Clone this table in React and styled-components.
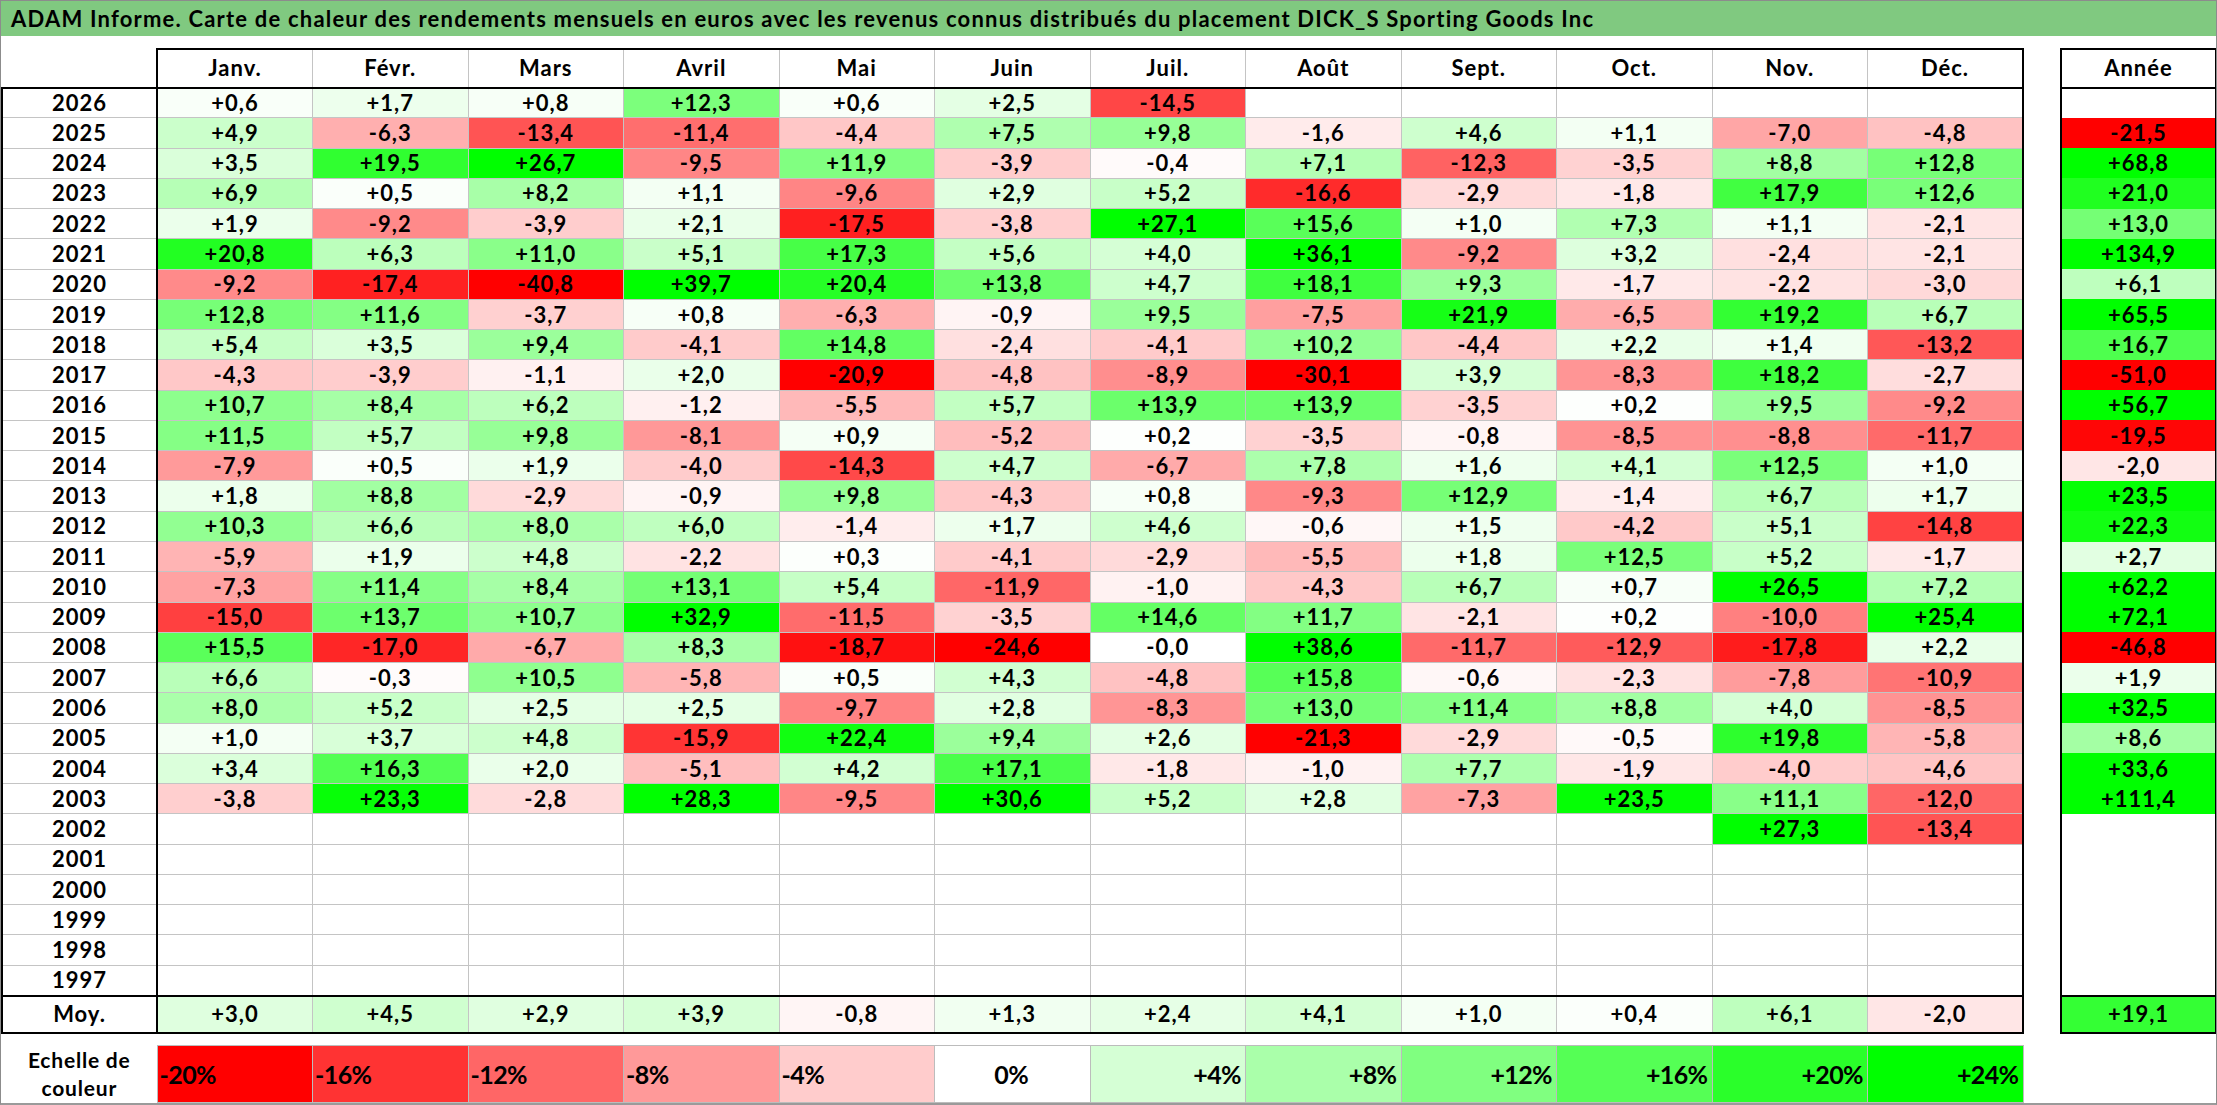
import React from 'react'
import styled, { createGlobalStyle } from 'styled-components'

const GlobalStyle = createGlobalStyle`
  html, body {
    margin: 0;
    padding: 0;
    background: #ffffff;
  }
  body {
    font-family: Lato, "Open Sans", "Liberation Sans", sans-serif;
    color: #000;
  }
`

const MONTHS = ['Janv.', 'Févr.', 'Mars', 'Avril', 'Mai', 'Juin', 'Juil.', 'Août', 'Sept.', 'Oct.', 'Nov.', 'Déc.']

// year, 12 months, year total ('' = no data)
const ROWS = [
  ['2026', '+0,6', '+1,7', '+0,8', '+12,3', '+0,6', '+2,5', '-14,5', '', '', '', '', '', ''],
  ['2025', '+4,9', '-6,3', '-13,4', '-11,4', '-4,4', '+7,5', '+9,8', '-1,6', '+4,6', '+1,1', '-7,0', '-4,8', '-21,5'],
  ['2024', '+3,5', '+19,5', '+26,7', '-9,5', '+11,9', '-3,9', '-0,4', '+7,1', '-12,3', '-3,5', '+8,8', '+12,8', '+68,8'],
  ['2023', '+6,9', '+0,5', '+8,2', '+1,1', '-9,6', '+2,9', '+5,2', '-16,6', '-2,9', '-1,8', '+17,9', '+12,6', '+21,0'],
  ['2022', '+1,9', '-9,2', '-3,9', '+2,1', '-17,5', '-3,8', '+27,1', '+15,6', '+1,0', '+7,3', '+1,1', '-2,1', '+13,0'],
  ['2021', '+20,8', '+6,3', '+11,0', '+5,1', '+17,3', '+5,6', '+4,0', '+36,1', '-9,2', '+3,2', '-2,4', '-2,1', '+134,9'],
  ['2020', '-9,2', '-17,4', '-40,8', '+39,7', '+20,4', '+13,8', '+4,7', '+18,1', '+9,3', '-1,7', '-2,2', '-3,0', '+6,1'],
  ['2019', '+12,8', '+11,6', '-3,7', '+0,8', '-6,3', '-0,9', '+9,5', '-7,5', '+21,9', '-6,5', '+19,2', '+6,7', '+65,5'],
  ['2018', '+5,4', '+3,5', '+9,4', '-4,1', '+14,8', '-2,4', '-4,1', '+10,2', '-4,4', '+2,2', '+1,4', '-13,2', '+16,7'],
  ['2017', '-4,3', '-3,9', '-1,1', '+2,0', '-20,9', '-4,8', '-8,9', '-30,1', '+3,9', '-8,3', '+18,2', '-2,7', '-51,0'],
  ['2016', '+10,7', '+8,4', '+6,2', '-1,2', '-5,5', '+5,7', '+13,9', '+13,9', '-3,5', '+0,2', '+9,5', '-9,2', '+56,7'],
  ['2015', '+11,5', '+5,7', '+9,8', '-8,1', '+0,9', '-5,2', '+0,2', '-3,5', '-0,8', '-8,5', '-8,8', '-11,7', '-19,5'],
  ['2014', '-7,9', '+0,5', '+1,9', '-4,0', '-14,3', '+4,7', '-6,7', '+7,8', '+1,6', '+4,1', '+12,5', '+1,0', '-2,0'],
  ['2013', '+1,8', '+8,8', '-2,9', '-0,9', '+9,8', '-4,3', '+0,8', '-9,3', '+12,9', '-1,4', '+6,7', '+1,7', '+23,5'],
  ['2012', '+10,3', '+6,6', '+8,0', '+6,0', '-1,4', '+1,7', '+4,6', '-0,6', '+1,5', '-4,2', '+5,1', '-14,8', '+22,3'],
  ['2011', '-5,9', '+1,9', '+4,8', '-2,2', '+0,3', '-4,1', '-2,9', '-5,5', '+1,8', '+12,5', '+5,2', '-1,7', '+2,7'],
  ['2010', '-7,3', '+11,4', '+8,4', '+13,1', '+5,4', '-11,9', '-1,0', '-4,3', '+6,7', '+0,7', '+26,5', '+7,2', '+62,2'],
  ['2009', '-15,0', '+13,7', '+10,7', '+32,9', '-11,5', '-3,5', '+14,6', '+11,7', '-2,1', '+0,2', '-10,0', '+25,4', '+72,1'],
  ['2008', '+15,5', '-17,0', '-6,7', '+8,3', '-18,7', '-24,6', '-0,0', '+38,6', '-11,7', '-12,9', '-17,8', '+2,2', '-46,8'],
  ['2007', '+6,6', '-0,3', '+10,5', '-5,8', '+0,5', '+4,3', '-4,8', '+15,8', '-0,6', '-2,3', '-7,8', '-10,9', '+1,9'],
  ['2006', '+8,0', '+5,2', '+2,5', '+2,5', '-9,7', '+2,8', '-8,3', '+13,0', '+11,4', '+8,8', '+4,0', '-8,5', '+32,5'],
  ['2005', '+1,0', '+3,7', '+4,8', '-15,9', '+22,4', '+9,4', '+2,6', '-21,3', '-2,9', '-0,5', '+19,8', '-5,8', '+8,6'],
  ['2004', '+3,4', '+16,3', '+2,0', '-5,1', '+4,2', '+17,1', '-1,8', '-1,0', '+7,7', '-1,9', '-4,0', '-4,6', '+33,6'],
  ['2003', '-3,8', '+23,3', '-2,8', '+28,3', '-9,5', '+30,6', '+5,2', '+2,8', '-7,3', '+23,5', '+11,1', '-12,0', '+111,4'],
  ['2002', '', '', '', '', '', '', '', '', '', '', '+27,3', '-13,4', ''],
  ['2001', '', '', '', '', '', '', '', '', '', '', '', '', ''],
  ['2000', '', '', '', '', '', '', '', '', '', '', '', '', ''],
  ['1999', '', '', '', '', '', '', '', '', '', '', '', '', ''],
  ['1998', '', '', '', '', '', '', '', '', '', '', '', '', ''],
  ['1997', '', '', '', '', '', '', '', '', '', '', '', '', ''],
]

const AVERAGE = ['+3,0', '+4,5', '+2,9', '+3,9', '-0,8', '+1,3', '+2,4', '+4,1', '+1,0', '+0,4', '+6,1', '-2,0', '+19,1']

const SCALE = [-20, -16, -12, -8, -4, 0, 4, 8, 12, 16, 20, 24]

// excel-like two colour scale: red at -20, white at 0, green at +24
const heat = (text) => {
  if (text === '' || text === undefined) return '#ffffff'
  const v = parseFloat(String(text).replace(',', '.'))
  if (v >= 0) {
    const c = Math.round(255 * (1 - Math.min(v / 24, 1)))
    return `rgb(${c},255,${c})`
  }
  const c = Math.round(255 * (1 - Math.min(-v / 20, 1)))
  return `rgb(255,${c},${c})`
}

const GRID = '#c4c4c4'
const BLACK = '2px solid #000'

const App = () => {
  return (
    <>
      <GlobalStyle />
      <Sheet>
        <TitleBar>
          ADAM Informe. Carte de chaleur des rendements mensuels en euros avec les revenus connus distribués du placement DICK_S Sporting Goods Inc
        </TitleBar>
        <HeatTable>
          <colgroup>
            <Col $w={155} />
            {MONTHS.map((m) => (
              <Col key={m} $w={155.5} />
            ))}
            <Col $w={38} />
            <Col $w={155} />
          </colgroup>
          <tbody>
            <HeadRow>
              <Corner />
              {MONTHS.map((m, i) => (
                <MonthHead key={m} $first={i === 0} $last={i === 11}>
                  {m}
                </MonthHead>
              ))}
              <Gap />
              <TotalHead>Année</TotalHead>
            </HeadRow>

            {ROWS.map((row) => (
              <YearRow key={row[0]}>
                <YearCell>{row[0]}</YearCell>
                {row.slice(1, 13).map((v, i) => (
                  <ValueCell key={i} $bg={heat(v)} $first={i === 0} $last={i === 11}>
                    {v}
                  </ValueCell>
                ))}
                <Gap />
                <TotalCell $bg={heat(row[13])}>{row[13]}</TotalCell>
              </YearRow>
            ))}

            <AverageRow>
              <AverageLabel>Moy.</AverageLabel>
              {AVERAGE.slice(0, 12).map((v, i) => (
                <AverageCell key={i} $bg={heat(v)} $first={i === 0} $last={i === 11}>
                  {v}
                </AverageCell>
              ))}
              <Gap />
              <AverageTotal $bg={heat(AVERAGE[12])}>{AVERAGE[12]}</AverageTotal>
            </AverageRow>

            <SpacerRow>
              <Gap colSpan={15} />
            </SpacerRow>

            <ScaleRow>
              <ScaleLabel>
                Echelle de
                <br />
                couleur
              </ScaleLabel>
              {SCALE.map((s) => (
                <ScaleCell key={s} $bg={heat(String(s))} $align={s < 0 ? 'left' : s === 0 ? 'center' : 'right'}>
                  {s > 0 ? `+${s}%` : `${s}%`}
                </ScaleCell>
              ))}
              <Gap colSpan={2} />
            </ScaleRow>
          </tbody>
        </HeatTable>
      </Sheet>
    </>
  )
}

export default App

const Sheet = styled.div`
  width: 2217px;
  height: 1105px;
  box-sizing: border-box;
  border-left: 1px solid #8c8c8c;
  border-right: 1px solid #8c8c8c;
  border-bottom: 2px solid #9a9a9a;
  display: flex;
  flex-direction: column;
  overflow: hidden;
`

const TitleBar = styled.div`
  height: 37px;
  box-sizing: border-box;
  background: #80c980;
  border-top: 1px solid #8c8c8c;
  display: flex;
  align-items: center;
  padding-left: 10px;
  font-size: 22px;
  font-weight: 700;
  letter-spacing: 1.2px;
  white-space: nowrap;
  margin-bottom: 12px;
`

const HeatTable = styled.table`
  width: 2215px;
  border-collapse: collapse;
  table-layout: fixed;
  font-size: 22px;
  font-weight: 700;
  letter-spacing: 1px;
  text-align: center;
`

const Col = styled.col`
  width: ${(p) => p.$w}px;
`

const HeadRow = styled.tr`
  height: 39px;
`

const YearRow = styled.tr`
  height: 30.27px;
`

const AverageRow = styled.tr`
  height: 37px;
`

const SpacerRow = styled.tr`
  height: 13px;
`

const ScaleRow = styled.tr`
  height: 57px;
`

const BaseCell = styled.td`
  padding: 0;
  vertical-align: middle;
  white-space: nowrap;
  line-height: 1;
`

const Corner = styled(BaseCell)`
  border-bottom: ${BLACK};
`

const MonthHead = styled(BaseCell)`
  border: 1px solid ${GRID};
  border-top: ${BLACK};
  border-bottom: ${BLACK};
  ${(p) => p.$first && `border-left: ${BLACK};`}
  ${(p) => p.$last && `border-right: ${BLACK};`}
`

const Gap = styled(BaseCell)`
  border: none;
`

const TotalHead = styled(BaseCell)`
  border: ${BLACK};
`

const YearCell = styled(BaseCell)`
  border-left: ${BLACK};
  border-bottom: 1px solid ${GRID};
`

const ValueCell = styled(BaseCell)`
  background: ${(p) => p.$bg};
  border: 1px solid ${GRID};
  ${(p) => p.$first && `border-left: ${BLACK};`}
  ${(p) => p.$last && `border-right: ${BLACK};`}
`

const TotalCell = styled(BaseCell)`
  background: ${(p) => p.$bg};
  border-left: ${BLACK};
  border-right: ${BLACK};
`

const AverageLabel = styled(BaseCell)`
  border-left: ${BLACK};
  border-top: ${BLACK};
  border-bottom: ${BLACK};
`

const AverageCell = styled(ValueCell)`
  border-top: ${BLACK};
  border-bottom: ${BLACK};
`

const AverageTotal = styled(BaseCell)`
  background: ${(p) => p.$bg};
  border: ${BLACK};
`

const ScaleLabel = styled(BaseCell)`
  line-height: 28px;
  font-size: 21px;
  letter-spacing: 0.8px;
`

const ScaleCell = styled(BaseCell)`
  background: ${(p) => p.$bg};
  border: 1px solid #bcbcbc;
  text-align: ${(p) => p.$align};
  padding: 0 4px 0 2px;
  font-size: 25px;
  letter-spacing: -0.6px;
`
